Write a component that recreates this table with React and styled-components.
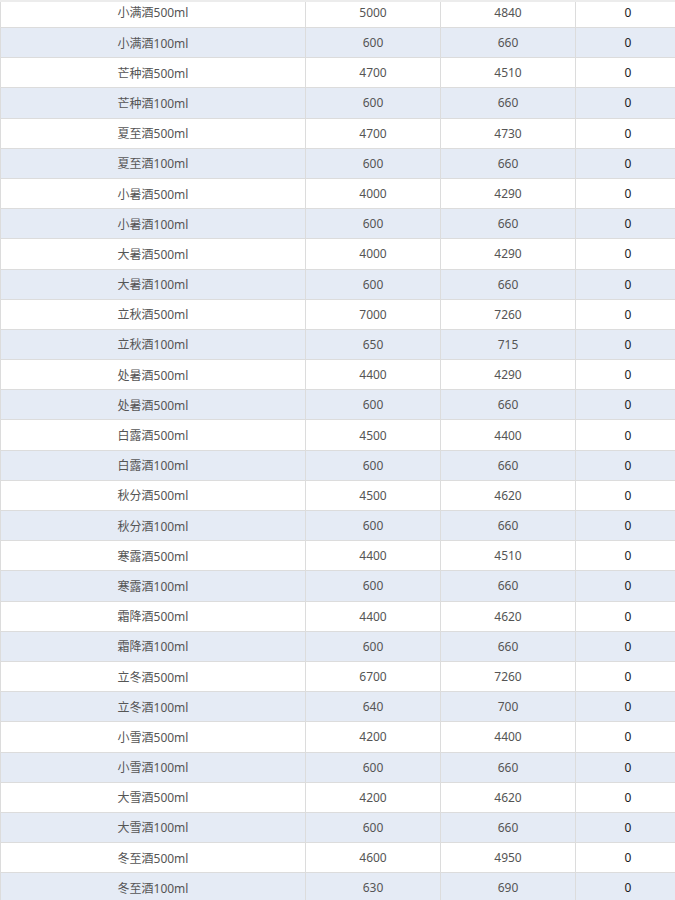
import React from 'react'
import styled, { createGlobalStyle } from 'styled-components'

const GlobalStyle = createGlobalStyle`
  html, body { margin: 0; padding: 0; background: #fff; }
  body { font-family: "Noto Sans", "Noto Sans CJK SC", sans-serif; }
`

const Page = styled.div`
  width: 675px;
  height: 900px;
  overflow: hidden;
  display: flex;
  flex-direction: column;
`

const TopStrip = styled.div`
  height: 2px;
  flex: none;
  background: #ececec;
`

const Scroller = styled.div`
  flex: 1;
  overflow: hidden;
`

const Table = styled.div`
  width: 682px;
  margin-top: -4.2px;
  border-left: 1px solid #dcdcdc;
  box-sizing: border-box;
`

const Row = styled.div`
  display: grid;
  grid-template-columns: 305px 135px 135px 105px;
  height: 30.2px;
  box-sizing: border-box;
  border-bottom: 1px solid #dcdcdc;
  background: ${p => (p.$alt ? '#e5ebf5' : '#fff')};
`

const Cell = styled.div`
  display: flex;
  align-items: center;
  justify-content: center;
  font-size: 12px;
  color: ${p => (p.$dark ? '#1a1a1a' : '#555')};
  border-right: 1px solid #dcdcdc;
  white-space: nowrap;
`

const rows = [
  ['小满酒500ml', 5000, 4840],
  ['小满酒100ml', 600, 660],
  ['芒种酒500ml', 4700, 4510],
  ['芒种酒100ml', 600, 660],
  ['夏至酒500ml', 4700, 4730],
  ['夏至酒100ml', 600, 660],
  ['小暑酒500ml', 4000, 4290],
  ['小暑酒100ml', 600, 660],
  ['大暑酒500ml', 4000, 4290],
  ['大暑酒100ml', 600, 660],
  ['立秋酒500ml', 7000, 7260],
  ['立秋酒100ml', 650, 715],
  ['处暑酒500ml', 4400, 4290],
  ['处暑酒500ml', 600, 660],
  ['白露酒500ml', 4500, 4400],
  ['白露酒100ml', 600, 660],
  ['秋分酒500ml', 4500, 4620],
  ['秋分酒100ml', 600, 660],
  ['寒露酒500ml', 4400, 4510],
  ['寒露酒100ml', 600, 660],
  ['霜降酒500ml', 4400, 4620],
  ['霜降酒100ml', 600, 660],
  ['立冬酒500ml', 6700, 7260],
  ['立冬酒100ml', 640, 700],
  ['小雪酒500ml', 4200, 4400],
  ['小雪酒100ml', 600, 660],
  ['大雪酒500ml', 4200, 4620],
  ['大雪酒100ml', 600, 660],
  ['冬至酒500ml', 4600, 4950],
  ['冬至酒100ml', 630, 690],
]

const App = () => (
  <>
    <GlobalStyle />
    <Page>
      <TopStrip />
      <Scroller>
        <Table>
          {rows.map((r, i) => (
            <Row key={i} $alt={i % 2 === 1}>
              <Cell>{r[0]}</Cell>
              <Cell>{r[1]}</Cell>
              <Cell>{r[2]}</Cell>
              <Cell $dark>0</Cell>
            </Row>
          ))}
        </Table>
      </Scroller>
    </Page>
  </>
)

export default App
